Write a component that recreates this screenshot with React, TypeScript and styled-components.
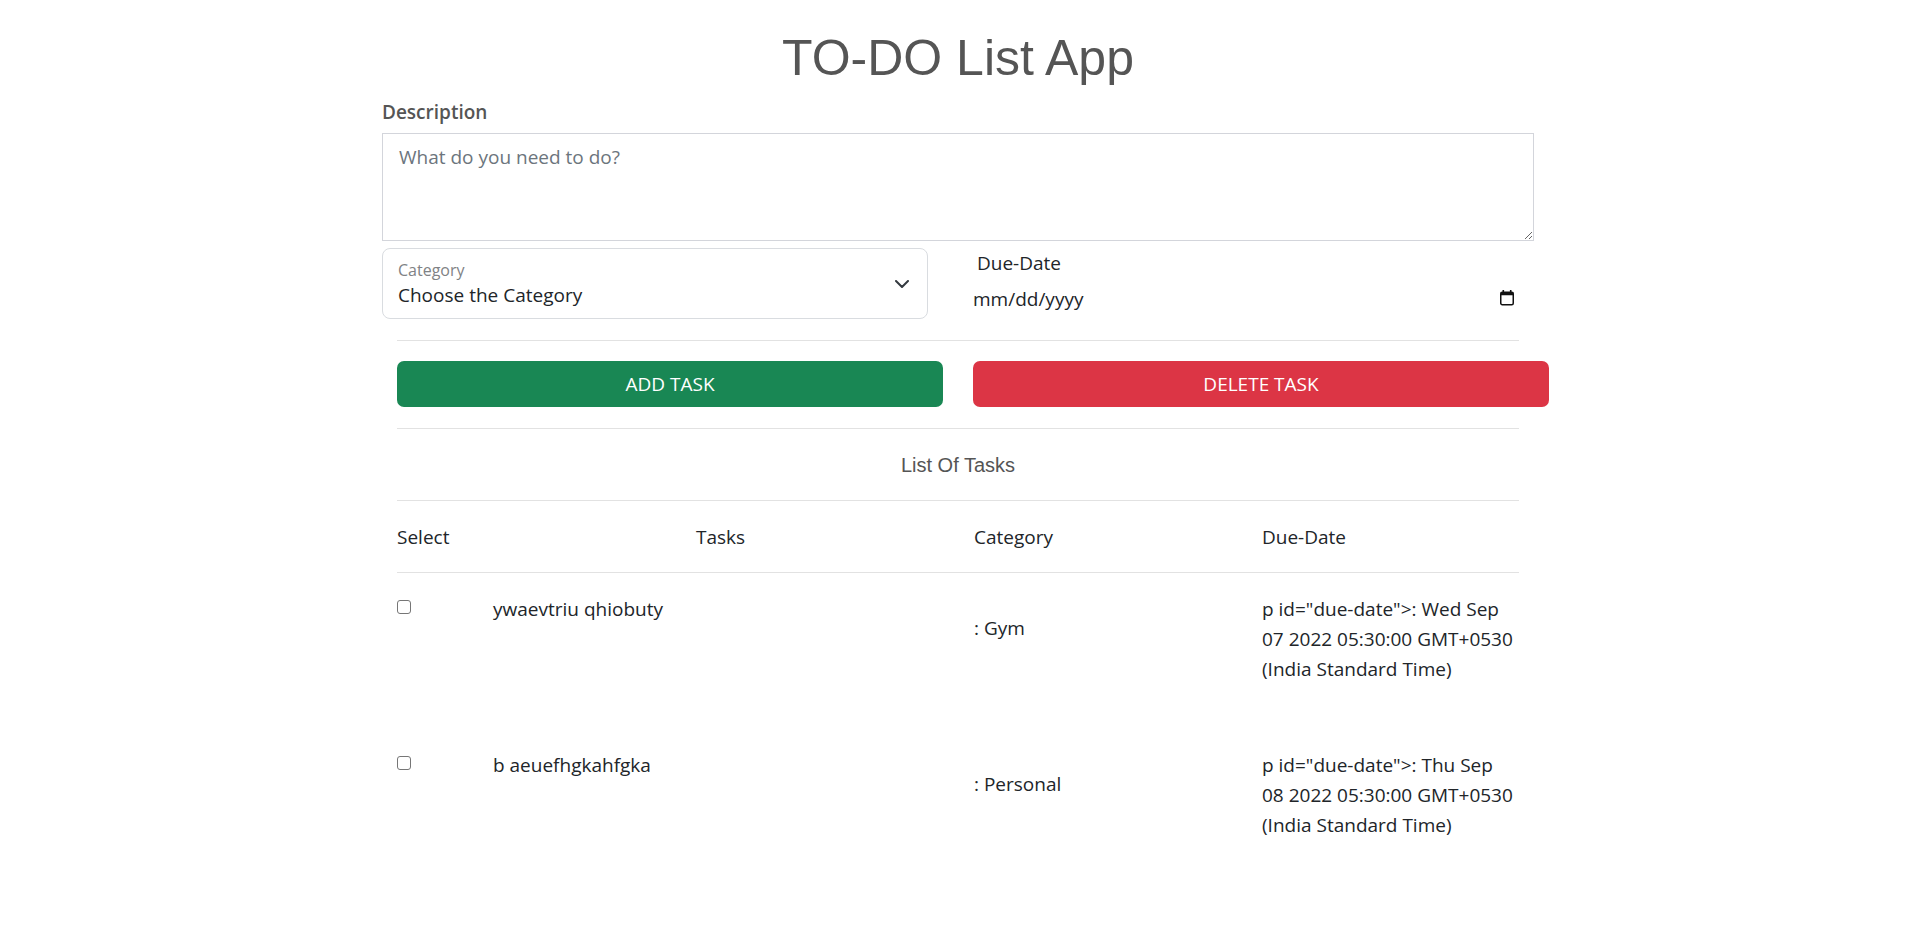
import React from "react";
import styled, { createGlobalStyle } from "styled-components";

const GlobalStyle = createGlobalStyle`
  html, body { margin: 0; padding: 0; background: #fff; }
  body {
    font-family: "Open Sans", "Noto Sans", sans-serif;
    font-size: 19px;
    line-height: 30px;
    color: #212529;
  }
  *, *::before, *::after { box-sizing: border-box; }
`;

const Page = styled.main`
  padding: 28px 1px 60px 0;
`;

const Title = styled.h1`
  margin: 0;
  text-align: center;
  font-family: "Liberation Sans", Arial, sans-serif;
  font-weight: 400;
  font-size: 50px;
  line-height: 60px;
  color: #555;
`;

const Form = styled.section`
  width: 1152px;
  margin: 0 auto;
`;

const FieldLabel = styled.label`
  display: block;
  margin-top: 9px;
  font-weight: 600;
  color: #555;
  line-height: 30px;
`;

const TextArea = styled.textarea`
  display: block;
  width: 100%;
  height: 108px;
  margin: 6px 0 0;
  border: 1px solid #d3d5db;
  border-radius: 0;
  padding: 8px 16px;
  font: inherit;
  line-height: 30px;
  color: #212529;
  resize: vertical;
  outline: none;
  &::placeholder { color: #6c757d; }
`;

const FieldRow = styled.div`
  display: flex;
  margin-top: 7px;
`;

const SelectBox = styled.div`
  width: 546px;
  height: 71px;
  border: 1px solid #d9dce0;
  border-radius: 8px;
  display: flex;
  align-items: center;
  justify-content: space-between;
  padding: 0 18px 0 15px;
  background: #fff;
`;

const SelectText = styled.div`
  display: flex;
  flex-direction: column;
`;

const FloatingLabel = styled.span`
  font-size: 16px;
  line-height: 20px;
  margin-bottom: 2px;
  color: #808285;
`;

const SelectValue = styled.span`
  font-size: 19px;
  line-height: 26px;
  color: #212529;
`;

const DateCol = styled.div`
  flex: 1;
  padding: 0 15px 0 45px;
`;

const DateLabel = styled.div`
  padding-left: 4px;
  line-height: 30px;
`;

const DateInput = styled.div`
  display: flex;
  align-items: center;
  justify-content: space-between;
  margin-top: 6px;
  padding-right: 4px;
  line-height: 30px;
  color: #212529;
  svg { margin-bottom: 3px; }
`;

const Lower = styled.div`
  padding: 0 15px;
`;

const Rule = styled.hr<{ $top: number }>`
  margin: ${(p) => p.$top}px 0 0;
  border: 0;
  border-top: 1px solid #e2e2e2;
  height: 0;
`;

const ButtonRow = styled.div`
  display: flex;
  gap: 30px;
  margin-top: 20px;
`;

const ActionButton = styled.button<{ $variant: "add" | "delete" }>`
  width: ${(p) => (p.$variant === "add" ? 546 : 576)}px;
  flex: none;
  height: 46px;
  border: none;
  border-radius: 7px;
  background: ${(p) => (p.$variant === "add" ? "#198754" : "#dc3545")};
  color: #fff;
  font-family: inherit;
  font-size: 19px;
  line-height: 30px;
  text-transform: uppercase;
  cursor: pointer;
`;

const ListTitle = styled.h2`
  margin: 21px 0 0;
  text-align: center;
  font-family: "Liberation Sans", Arial, sans-serif;
  font-weight: 400;
  font-size: 20px;
  line-height: 30px;
  color: #555;
`;

const columns = "96px 203px 278px 288px 257px";

const HeadRow = styled.div`
  display: grid;
  grid-template-columns: ${columns};
  padding: 21px 0 20px;
`;

const HeadCell = styled.div<{ $span?: number }>`
  grid-column: span ${(p) => p.$span ?? 1};
  line-height: 30px;
  color: #212529;
`;

const TaskRow = styled.div`
  display: grid;
  grid-template-columns: ${columns};
  align-items: start;
  padding: 21px 0 45px;
`;

const CheckBox = styled.input`
  appearance: none;
  width: 14px;
  height: 14px;
  margin: 6px 0 0;
  border: 1px solid #767676;
  border-radius: 3px;
  background: #fff;
`;

const TaskCell = styled.div`
  grid-column: span 2;
  line-height: 30px;
`;

const CategoryCell = styled.div`
  margin-top: 19px;
  line-height: 30px;
`;

const DueCell = styled.div`
  line-height: 30px;
`;

const DueLine = styled.span`
  display: block;
  white-space: nowrap;
`;

const Chevron = () => (
  <svg width="14" height="8" viewBox="0 0 14 8" fill="none">
    <path d="M1 1l6 6 6-6" stroke="#343a40" strokeWidth="2" strokeLinecap="round" strokeLinejoin="round" />
  </svg>
);

const CalendarIcon = () => (
  <svg width="16" height="17" viewBox="0 0 16 17" fill="none">
    <rect x="1.75" y="3.25" width="12.5" height="12.5" rx="1.5" stroke="#111" strokeWidth="1.5" />
    <rect x="1.75" y="3.25" width="12.5" height="3" fill="#111" />
    <rect x="3.5" y="1" width="1.6" height="3" fill="#111" />
    <rect x="10.9" y="1" width="1.6" height="3" fill="#111" />
  </svg>
);

const tasks = [
  {
    text: "ywaevtriu qhiobuty",
    category: "Gym",
    due: ['p id="due-date">: Wed Sep', "07 2022 05:30:00 GMT+0530", "(India Standard Time)"],
  },
  {
    text: "b aeuefhgkahfgka",
    category: "Personal",
    due: ['p id="due-date">: Thu Sep', "08 2022 05:30:00 GMT+0530", "(India Standard Time)"],
  },
];

export default function App() {
  return (
    <>
      <GlobalStyle />
      <Page>
        <Title>TO-DO List App</Title>
        <Form>
          <FieldLabel htmlFor="description">Description</FieldLabel>
          <TextArea id="description" placeholder="What do you need to do?" />
          <FieldRow>
            <SelectBox>
              <SelectText>
                <FloatingLabel>Category</FloatingLabel>
                <SelectValue>Choose the Category</SelectValue>
              </SelectText>
              <Chevron />
            </SelectBox>
            <DateCol>
              <DateLabel>Due-Date</DateLabel>
              <DateInput>
                <span>mm/dd/yyyy</span>
                <CalendarIcon />
              </DateInput>
            </DateCol>
          </FieldRow>
          <Lower>
            <Rule $top={21} />
            <ButtonRow>
              <ActionButton $variant="add">Add Task</ActionButton>
              <ActionButton $variant="delete">Delete Task</ActionButton>
            </ButtonRow>
            <Rule $top={21} />
            <ListTitle>List Of Tasks</ListTitle>
            <Rule $top={20} />
            <HeadRow>
              <HeadCell $span={2}>Select</HeadCell>
              <HeadCell>Tasks</HeadCell>
              <HeadCell>Category</HeadCell>
              <HeadCell>Due-Date</HeadCell>
            </HeadRow>
            <Rule $top={0} />
            {tasks.map((t) => (
              <TaskRow key={t.text}>
                <CheckBox type="checkbox" />
                <TaskCell>{t.text}</TaskCell>
                <CategoryCell>: {t.category}</CategoryCell>
                <DueCell>
                  {t.due.map((line) => (
                    <DueLine key={line}>{line}</DueLine>
                  ))}
                </DueCell>
              </TaskRow>
            ))}
          </Lower>
        </Form>
      </Page>
    </>
  );
}
